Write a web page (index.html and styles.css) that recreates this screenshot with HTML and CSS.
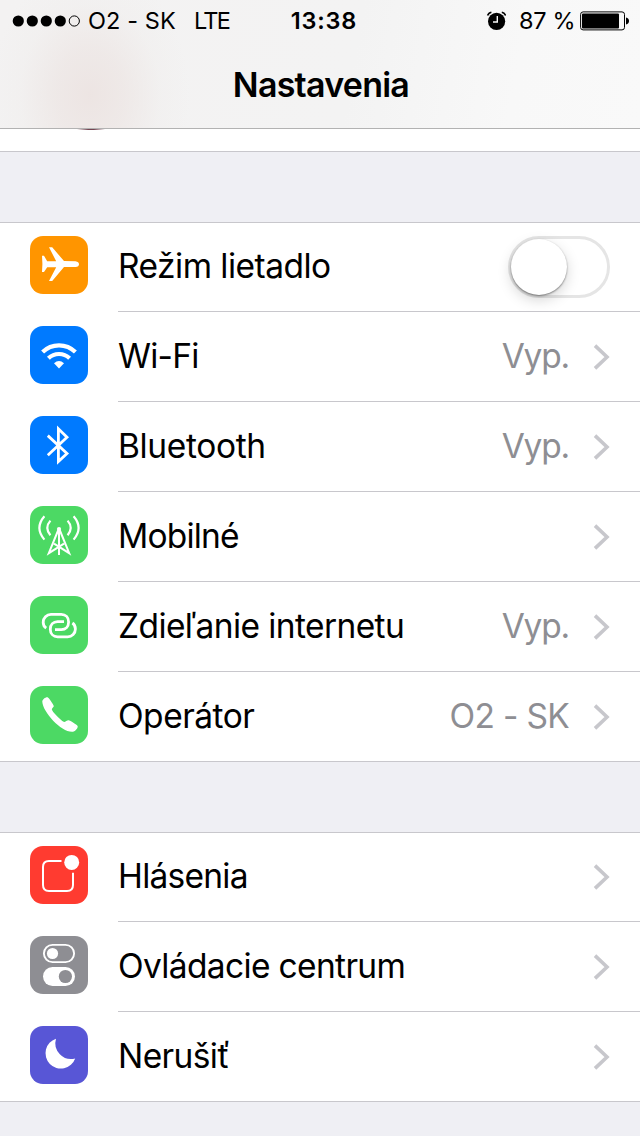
FILE: index.html
```
<!DOCTYPE html>
<html lang="sk">

<head>
    <meta charset="UTF-8">
    <meta name="viewport" content="width=device-width, initial-scale=1.0">
    <title>Nastavenia</title>
    <link rel="stylesheet" href="styles.css">
</head>

<body>

    <div class="header">
        <div class="status-bar">
            <div class="status-left">
                <svg class="signal" width="70" height="14" viewBox="0 0 70 14">
                    <circle cx="6.3" cy="7" r="5.6" />
                    <circle cx="20.3" cy="7" r="5.6" />
                    <circle cx="34.3" cy="7" r="5.6" />
                    <circle cx="48.3" cy="7" r="5.6" />
                    <circle cx="62.3" cy="7" r="5.1" fill="none" stroke="#000" stroke-width="1" />
                </svg>
                <span class="carrier">O2 - SK</span>
                <span class="network">LTE</span>
            </div>
            <div class="time">13:38</div>
            <div class="status-right">
                <svg class="alarm" width="20" height="20" viewBox="0 0 20 20">
                    <circle cx="10.6" cy="10.3" r="8.6" />
                    <path d="M1.6 4.6A5 5 0 0 1 5.4 1.2M15.8 1.2A5 5 0 0 1 19.6 4.6" fill="none" stroke="#000" stroke-width="1.6" />
                    <path d="M11.3 5V11H7" fill="none" stroke="#f6f6f6" stroke-width="1.4" />
                </svg>
                <span class="percent">87 %</span>
                <svg class="battery" width="50" height="20" viewBox="0 0 50 20">
                    <rect x="0.6" y="0.9" width="43.9" height="18" rx="2.5" fill="none" stroke="#000" stroke-width="1" />
                    <rect x="2" y="2.4" width="37" height="15" rx="1" />
                    <path d="M46 6.5Q49 7.2 49 10T46 13.5Z" />
                </svg>
            </div>
        </div>
        <h1 class="title">Nastavenia</h1>
    </div>

    <!-- Bottom of the profile row that is scrolled under the header -->
    <div class="profile-row">
        <div class="avatar-edge"></div>
    </div>

    <div class="group">
        <div class="row">
            <svg class="icon orange" viewBox="0 0 58 58">
                <path fill="#fff" d="M12 19.8H14L17.2 25.3L26.2 25.2L19 11.3H22.2L34 25.1L45.5 25.2Q49 25.8 49 28.2T45.5 31H34L22.2 44.9H19L26.2 31.2H17.2L14 36H12L12.4 28.1Z" />
            </svg>
            <div class="cell">
                <span class="label l-airplane">Režim lietadlo</span>
                <span class="switch"><span class="knob"></span></span>
            </div>
        </div>
        <div class="row">
            <svg class="icon blue" viewBox="0 0 58 58">
                <g fill="none" stroke="#fff" stroke-width="4.2">
                    <path d="M12.6 26A23.5 23.5 0 0 1 45.4 26" />
                    <path d="M18.4 32.2A15.5 15.5 0 0 1 39.6 32.2" />
                </g>
                <path fill="#fff" d="M24 37.3Q29 32.6 34 37.3L29 42.6Z" />
            </svg>
            <div class="cell">
                <span class="label l-wifi">Wi-Fi</span>
                <span class="value">Vyp.</span>
                <svg class="chevron" viewBox="0 0 17 26"><path d="M2 1.6L14 13L2 24.4" /></svg>
            </div>
        </div>
        <div class="row">
            <svg class="icon blue" viewBox="0 0 58 58">
                <path fill="none" stroke="#fff" stroke-width="2.8" d="M17.8 19.6L37 37.4L28.4 45.6V12.8L37 21.2L17.8 39.2" />
            </svg>
            <div class="cell">
                <span class="label l-bluetooth">Bluetooth</span>
                <span class="value">Vyp.</span>
                <svg class="chevron" viewBox="0 0 17 26"><path d="M2 1.6L14 13L2 24.4" /></svg>
            </div>
        </div>
        <div class="row">
            <svg class="icon green" viewBox="0 0 58 58">
                <g fill="none" stroke="#fff" stroke-width="2.2">
                    <path d="M14.4 10.2Q4.4 21.8 14.4 33.6M43.6 10.2Q53.6 21.8 43.6 33.6" />
                    <path d="M20.4 14.6Q14.2 21.8 20.4 29.2M37.6 14.6Q43.8 21.8 37.6 29.2" />
                    <path d="M28.3 24L18.8 47.2L34 37.7M29.7 24L39.2 47.2L24 37.7M29 23V49" stroke-width="2" />
                </g>
                <circle cx="29" cy="23" r="2.1" fill="#fff" />
            </svg>
            <div class="cell">
                <span class="label l-mobile">Mobilné</span>
                <svg class="chevron" viewBox="0 0 17 26"><path d="M2 1.6L14 13L2 24.4" /></svg>
            </div>
        </div>
        <div class="row">
            <svg class="icon green" viewBox="0 0 58 58">
                <g fill="none" stroke="#fff" stroke-width="2.8">
                    <path d="M16.2 32.2C13.8 30.6 13.2 28.6 13.2 26.2C13.2 21.8 16.6 18.4 21 18.4H31.3C35.7 18.4 38.6 21.6 38.6 26C38.6 30.4 35.7 33.6 31.3 33.6H25" />
                    <path d="M42.4 27C44.8 28.6 45.4 30.6 45.4 33C45.4 37.4 42 40.8 37.6 40.8H27.6C23.2 40.8 20.3 37.6 20.3 33.2C20.3 28.8 23.2 25.6 27.6 25.6H34" />
                </g>
            </svg>
            <div class="cell">
                <span class="label l-hotspot">Zdieľanie internetu</span>
                <span class="value">Vyp.</span>
                <svg class="chevron" viewBox="0 0 17 26"><path d="M2 1.6L14 13L2 24.4" /></svg>
            </div>
        </div>
        <div class="row">
            <svg class="icon green" viewBox="0 0 58 58">
                <path fill="#fff" d="M12.3 15.8C12 13.4 15.8 10.9 17.6 11.3C18.8 11.6 23.4 18.6 23.8 20C24 21 21.9 22.2 21.8 23.3C21.7 25.5 31 34.4 33.6 35.8C35 36.4 37.3 33.9 38.6 34.2C40.2 34.5 46.8 38.6 47.6 39.9C48.4 41.4 45.4 45.4 42.8 45.8C31.8 46.8 12.9 26.5 12.3 15.8Z" />
            </svg>
            <div class="cell">
                <span class="label l-operator">Operátor</span>
                <span class="value v-carrier">O2 - SK</span>
                <svg class="chevron" viewBox="0 0 17 26"><path d="M2 1.6L14 13L2 24.4" /></svg>
            </div>
        </div>
    </div>

    <div class="group">
        <div class="row">
            <svg class="icon red" viewBox="0 0 58 58">
                <path fill="none" stroke="#fff" stroke-width="2" d="M31.5 15H19Q13 15 13 21V39Q13 45 19 45H37Q43 45 43 39V26.8" />
                <circle cx="41.7" cy="16.4" r="7.5" fill="#fff" />
            </svg>
            <div class="cell">
                <span class="label l-notifications">Hlásenia</span>
                <svg class="chevron" viewBox="0 0 17 26"><path d="M2 1.6L14 13L2 24.4" /></svg>
            </div>
        </div>
        <div class="row">
            <svg class="icon gray" viewBox="0 0 58 58">
                <rect x="13.9" y="8.9" width="30.2" height="17.2" rx="8.6" fill="none" stroke="#fff" stroke-width="1.9" />
                <circle cx="22.5" cy="17.5" r="5.6" fill="#fff" />
                <rect x="13" y="31" width="32" height="19" rx="9.5" fill="#fff" />
                <circle cx="35.4" cy="40.5" r="6.6" fill="#8e8e93" />
            </svg>
            <div class="cell">
                <span class="label l-control">Ovládacie centrum</span>
                <svg class="chevron" viewBox="0 0 17 26"><path d="M2 1.6L14 13L2 24.4" /></svg>
            </div>
        </div>
        <div class="row">
            <svg class="icon purple" viewBox="0 0 58 58">
                <path fill="#fff" d="M26 12.7A15.3 15.3 0 1 0 45.2 32.4A15.8 15.8 0 0 1 26 12.7Z" />
            </svg>
            <div class="cell">
                <span class="label l-dnd">Nerušiť</span>
                <svg class="chevron" viewBox="0 0 17 26"><path d="M2 1.6L14 13L2 24.4" /></svg>
            </div>
        </div>
    </div>

</body>

</html>
```

FILE: styles.css
```
* {
    box-sizing: border-box;
}

body {
    font-family: Inter, "Liberation Sans", sans-serif;
    margin: 0;
    width: 640px;
    height: 1136px;
    overflow: hidden;
    background-color: #efeff4;
    color: #000;
}

/* Header */
.header {
    height: 129px;
    border-bottom: 1px solid #b2b2b2;
    background: radial-gradient(ellipse 100px 130px at 90px 95px, rgba(236, 227, 225, 0.9) 0%, rgba(236, 228, 226, 0.65) 35%, rgba(238, 234, 232, 0.25) 70%, rgba(243, 242, 242, 0) 100%),
        linear-gradient(100deg, #f3f2f2 0%, #f3f3f3 55%, #f8f8f8 80%, #f9f9f9 100%);
}

.status-bar {
    display: grid;
    grid-template-columns: 275px 96px 1fr;
    align-items: center;
    height: 41px;
    font-size: 23.5px;
    line-height: 41px;
    white-space: nowrap;
}

.status-left,
.status-right {
    display: flex;
    align-items: center;
}

.status-left {
    padding-left: 12px;
}

.signal {
    margin-right: 6px;
}

.carrier {
    width: 106px;
    letter-spacing: 0.1px;
}

.network {
    letter-spacing: -1.7px;
}

.time {
    padding-left: 2px;
    text-align: center;
    font-weight: 600;
    letter-spacing: 0.8px;
}

.status-right {
    padding-left: 115px;
}

.percent {
    width: 61px;
    margin-left: 13px;
    letter-spacing: -0.3px;
}

.title {
    margin: 0;
    height: 87px;
    padding-left: 2px;
    line-height: 87px;
    font-size: 34px;
    font-weight: 600;
    letter-spacing: -0.75px;
    text-align: center;
}

.profile-row {
    height: 23px;
    background-color: #fff;
    border-bottom: 1px solid #c8c7cc;
}

.avatar-edge {
    width: 28px;
    height: 1px;
    margin-left: 77px;
    background: linear-gradient(90deg, rgba(116, 70, 82, 0), #744652 40%, #744652 60%, rgba(116, 70, 82, 0));
}

/* Settings list */
.group {
    margin-top: 70px;
    background-color: #fff;
    border-bottom: 1px solid #c8c7cc;
}

.row {
    display: flex;
    height: 90px;
    padding-left: 30px;
}

.row:first-child {
    border-top: 1px solid #c8c7cc;
}

.row:last-child {
    height: 89px;
}

.icon {
    flex: none;
    width: 58px;
    height: 58px;
    margin: 14px 30px 0 0;
    border-radius: 13px;
}

.row:first-child .icon {
    margin-top: 13px;
}

.cell {
    display: flex;
    flex: 1;
    align-items: center;
    border-bottom: 1px solid #c8c7cc;
    padding-right: 30px;
    font-size: 33.5px;
    white-space: nowrap;
}

.row:last-child .cell {
    border-bottom: none;
}

.label,
.value {
    align-self: flex-start;
    line-height: 88px;
}

.row:first-child .label {
    line-height: 86px;
}

.label {
    flex: 1;
    letter-spacing: -0.6px;
}

.l-airplane {
    letter-spacing: -0.52px;
}

.l-wifi {
    letter-spacing: -0.75px;
}

.l-bluetooth {
    letter-spacing: -0.35px;
}

.l-mobile {
    letter-spacing: -0.8px;
}

.l-operator {
    letter-spacing: -0.5px;
}

.l-notifications {
    letter-spacing: -0.75px;
}

.l-control {
    letter-spacing: -0.65px;
}

.value {
    color: #8e8e93;
    margin-right: 24px;
    letter-spacing: -1.2px;
}

.v-carrier {
    letter-spacing: -0.7px;
}

.chevron {
    width: 17px;
    height: 26px;
    fill: none;
    stroke: #c7c7cc;
    stroke-width: 3.6;
}

.switch {
    width: 102px;
    height: 62px;
    border: 3px solid #e5e5e5;
    border-radius: 31px;
}

.knob {
    display: block;
    width: 56px;
    height: 56px;
    border-radius: 50%;
    background-color: #fff;
    box-shadow: 0 1px 2px rgba(0, 0, 0, 0.45), 0 5px 14px rgba(0, 0, 0, 0.17);
}

.orange {
    background-color: #ff9500;
}

.blue {
    background-color: #007aff;
}

.green {
    background-color: #4cd964;
}

.red {
    background-color: #ff3b30;
}

.gray {
    background-color: #8e8e93;
}

.purple {
    background-color: #5856d6;
}
```
